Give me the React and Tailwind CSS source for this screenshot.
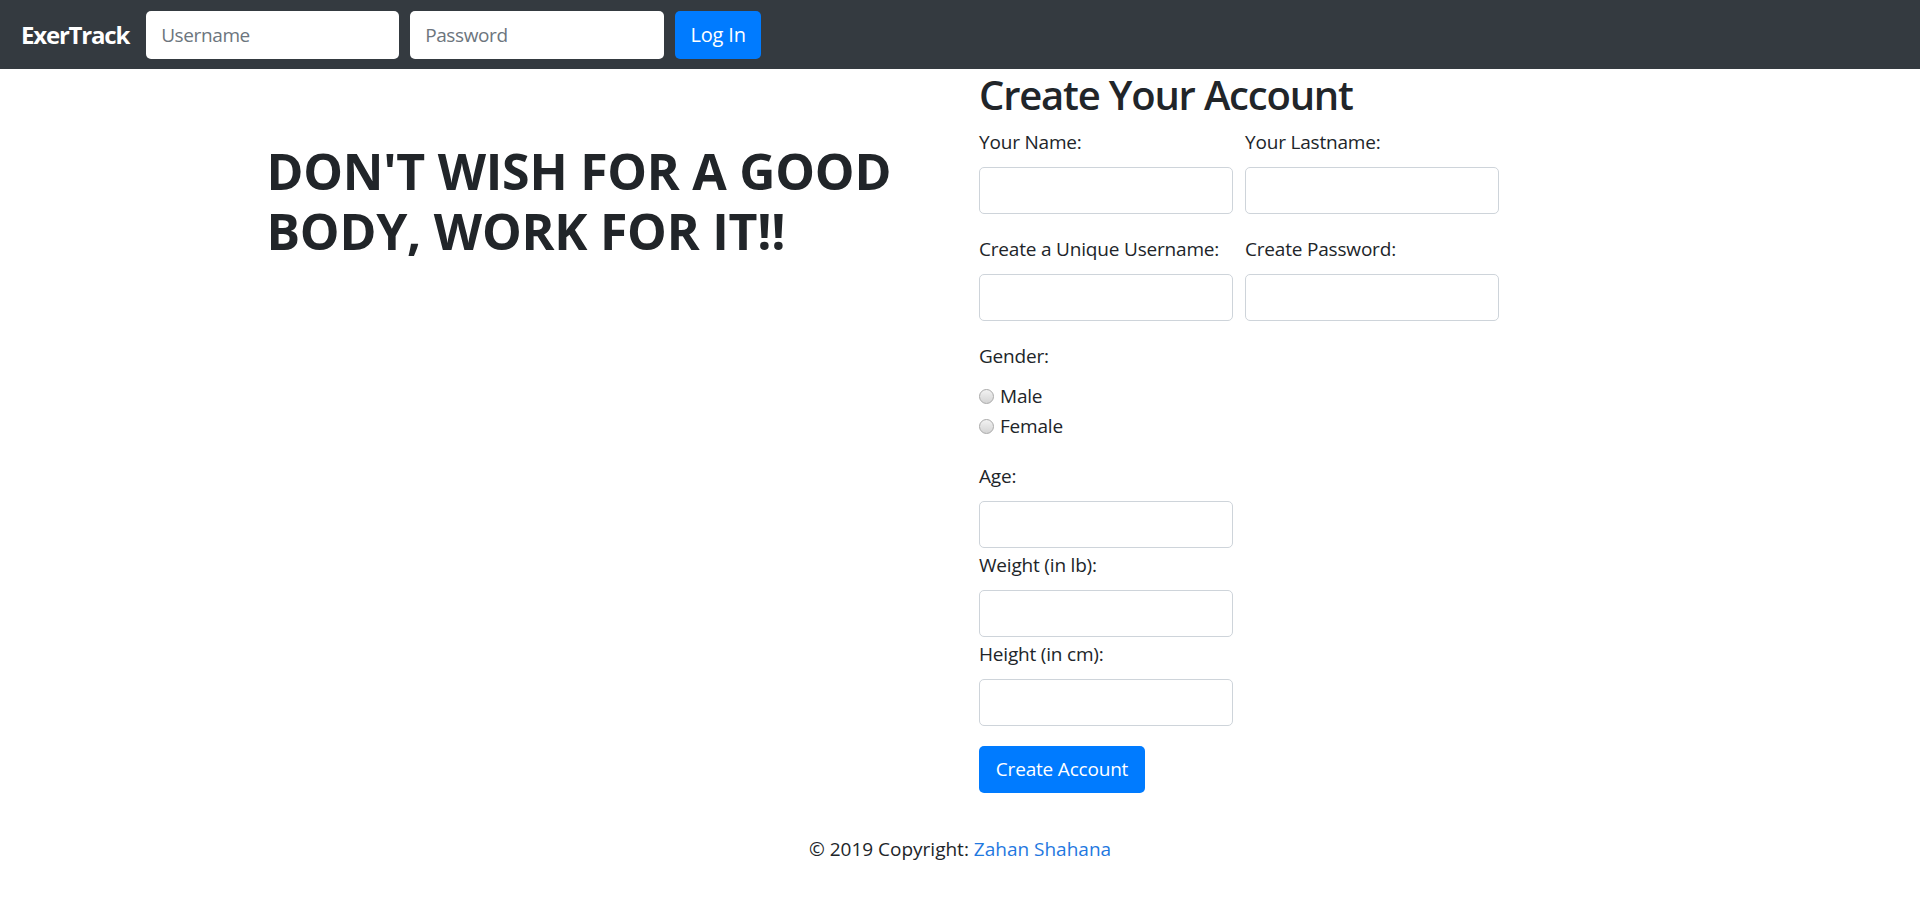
import React from 'react'

const font = { fontFamily: '"Open Sans", "Noto Sans", Arial, sans-serif' }

const Field = ({ label, className = '' }) => (
    <div className={`w-[254px] shrink-0 ${className}`}>
        <label className="block mb-[10px] text-[19px] leading-[30px] tracking-[-0.01em] whitespace-nowrap text-[#212529]">
            {label}
        </label>
        <input
            type="text"
            className="block w-[254px] h-[47px] px-[15px] rounded-[5px] border border-[#ced4da] bg-white text-[20px] outline-none"
        />
    </div>
)

const Radio = ({ label }) => (
    <label className="flex items-center h-[30px] text-[19px] tracking-[-0.01em] text-[#212529]">
        <span className="w-[15px] h-[15px] rounded-full border border-[#a9a9a9] bg-gradient-to-b from-[#f2f2f2] to-[#d4d4d4] mr-[6px]" />
        {label}
    </label>
)

const Navbar = () => (
    <nav className="flex items-center h-[69px] px-[21px] bg-[#343a40]">
        <a className="text-white font-bold text-[24px] mr-[17px] tracking-[-0.05em]">ExerTrack</a>
        <input
            placeholder="Username"
            className="w-[253px] h-[48px] px-[15px] mr-[11px] rounded-[5px] bg-white text-[19px] tracking-[-0.02em] placeholder-[#6c757d] outline-none"
        />
        <input
            placeholder="Password"
            className="w-[254px] h-[48px] px-[15px] mr-[11px] rounded-[5px] bg-white text-[19px] tracking-[-0.02em] placeholder-[#6c757d] outline-none"
        />
        <button className="h-[48px] w-[86px] rounded-[5px] bg-[#007bff] text-white text-[20px] tracking-[-0.01em]">
            Log In
        </button>
    </nav>
)

export default function App() {
    return (
        <div style={font} className="min-h-[900px] bg-white text-[#212529]">
            <Navbar />
            <div className="w-[1425px] mx-auto flex">
                <div className="w-1/2 px-[19px]">
                    <h1 className="mt-[72px] text-[50px] leading-[60px] font-bold tracking-[-0.005em]">
                        DON'T WISH FOR A GOOD
                        <br />
                        BODY, WORK FOR IT!!
                    </h1>
                </div>
                <div className="w-1/2 px-[19px]">
                    <h2 className="mt-[2px] mb-[8px] text-[40px] leading-[48px] font-semibold tracking-[-0.03em]">
                        Create Your Account
                    </h2>
                    <div className="flex gap-[12px] mb-[20px]">
                        <Field label="Your Name:" />
                        <Field label="Your Lastname:" />
                    </div>
                    <div className="flex gap-[12px] mb-[20px]">
                        <Field label="Create a Unique Username:" />
                        <Field label="Create Password:" />
                    </div>
                    <div className="mb-[20px]">
                        <div className="text-[19px] leading-[30px] tracking-[-0.01em] mb-[10px]">Gender:</div>
                        <Radio label="Male" />
                        <Radio label="Female" />
                    </div>
                    <Field label="Age:" className="mb-[2px]" />
                    <Field label="Weight (in lb):" className="mb-[2px]" />
                    <Field label="Height (in cm):" className="mb-[20px]" />
                    <button className="h-[47px] w-[166px] rounded-[5px] bg-[#007bff] text-white text-[19px] tracking-[-0.01em]">
                        Create Account
                    </button>
                </div>
            </div>
            <footer className="mt-[41px] text-center text-[19px] leading-[30px]">
                © 2019 Copyright: <a className="text-[#1f78e0]">Zahan Shahana</a>
            </footer>
        </div>
    )
}
